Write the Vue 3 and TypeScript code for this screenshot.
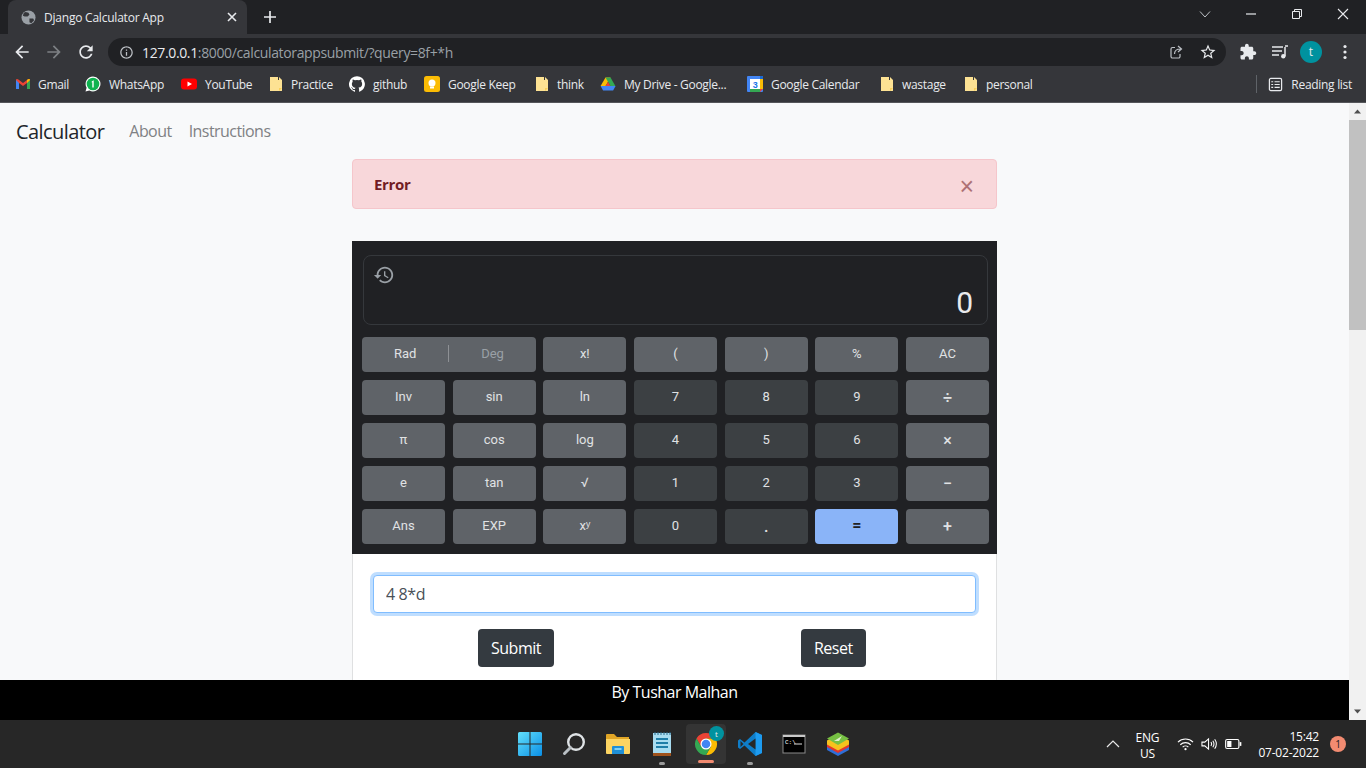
<script setup lang="ts">
interface Mark { name: string; label: string; width: number }
const marks: Mark[] = [
  { name: 'gmail', label: 'Gmail', width: 70 },
  { name: 'whatsapp', label: 'WhatsApp', width: 96 },
  { name: 'youtube', label: 'YouTube', width: 88 },
  { name: 'folder', label: 'Practice', width: 80 },
  { name: 'github', label: 'github', width: 75 },
  { name: 'keep', label: 'Google Keep', width: 111 },
  { name: 'folder', label: 'think', width: 65 },
  { name: 'drive', label: 'My Drive - Google...', width: 147 },
  { name: 'calendar', label: 'Google Calendar', width: 133 },
  { name: 'folder', label: 'wastage', width: 84 },
  { name: 'folder', label: 'personal', width: 69 }
]
interface Key { t: string; k: string }
const keys: Key[] = [
  { t: 'x!', k: 'fn' }, { t: '(', k: 'fn' }, { t: ')', k: 'fn' }, { t: '%', k: 'fn' }, { t: 'AC', k: 'fn' },
  { t: 'Inv', k: 'fn' }, { t: 'sin', k: 'fn' }, { t: 'ln', k: 'fn' }, { t: '7', k: 'num' }, { t: '8', k: 'num' }, { t: '9', k: 'num' }, { t: '÷', k: 'fn op' },
  { t: 'π', k: 'fn' }, { t: 'cos', k: 'fn' }, { t: 'log', k: 'fn' }, { t: '4', k: 'num' }, { t: '5', k: 'num' }, { t: '6', k: 'num' }, { t: '×', k: 'fn op' },
  { t: 'e', k: 'fn' }, { t: 'tan', k: 'fn' }, { t: '√', k: 'fn' }, { t: '1', k: 'num' }, { t: '2', k: 'num' }, { t: '3', k: 'num' }, { t: '−', k: 'fn op' },
  { t: 'Ans', k: 'fn' }, { t: 'EXP', k: 'fn' }, { t: 'xʸ', k: 'fn' }, { t: '0', k: 'num' }, { t: '.', k: 'num op' }, { t: '=', k: 'eq' }, { t: '+', k: 'fn op' }
]
</script>

<template>
  <div class="screen">
    <header class="chrome">
      <div class="tabstrip">
        <div class="tab">
          <svg class="globe" viewBox="0 0 16 16" width="15" height="15"><circle cx="8" cy="8" r="7.5" fill="#9aa0a6"/><path d="M5 2l3 1 1 2-2 2-3 0-2-1 1-3zM9 9l4 0 1 2-3 3-2-1z" fill="#35363a"/></svg>
          <span class="tabtitle">Django Calculator App</span>
          <svg viewBox="0 0 10 10" width="10" height="10"><path d="M1 1l8 8M9 1l-8 8" stroke="#e8eaed" stroke-width="1.6"/></svg>
        </div>
        <svg class="plus" viewBox="0 0 14 14" width="14" height="14"><path d="M7 1v12M1 7h12" stroke="#e8eaed" stroke-width="1.7"/></svg>
        <div class="wincontrols">
          <svg viewBox="0 0 12 12" width="12" height="12"><path d="M1 3.5l5 5.5 5-5.5" fill="none" stroke="#bdc1c6"/></svg>
          <svg viewBox="0 0 12 12" width="12" height="12"><path d="M1 6h10" stroke="#e8eaed" stroke-width="1.2"/></svg>
          <svg viewBox="0 0 12 12" width="12" height="12"><path d="M1.5 3.5h7v7h-7zM3.5 3.500v-2h7v7h-2" fill="none" stroke="#e8eaed"/></svg>
          <svg viewBox="0 0 12 12" width="12" height="12"><path d="M1 1l10 10M11 1l-10 10" stroke="#e8eaed" stroke-width="1.1"/></svg>
        </div>
      </div>
      <div class="toolbar">
        <svg class="navicon first" viewBox="0 0 24 24" width="20" height="20"><path fill="#e8eaed" d="M20 11H7.83l5.59-5.59L12 4l-8 8 8 8 1.41-1.41L7.83 13H20v-2z"/></svg>
        <svg class="navicon" viewBox="0 0 24 24" width="20" height="20"><path fill="#7d8084" d="M4 11h12.17l-5.59-5.59L12 4l8 8-8 8-1.41-1.41L16.17 13H4v-2z"/></svg>
        <svg class="navicon" viewBox="0 0 24 24" width="20" height="20"><path fill="#e8eaed" d="M17.65 6.35C16.2 4.9 14.21 4 12 4c-4.42 0-7.99 3.58-7.99 8s3.57 8 7.99 8c3.73 0 6.84-2.55 7.73-6h-2.08c-.82 2.33-3.04 4-5.65 4-3.31 0-6-2.69-6-6s2.69-6 6-6c1.66 0 3.14.69 4.22 1.78L13 11h7V4l-2.35 2.35z"/></svg>
        <div class="omnibox">
          <svg viewBox="0 0 24 24" width="15" height="15"><path fill="#bdc1c6" d="M11 7h2v2h-2zm0 4h2v6h-2zm1-9C6.48 2 2 6.48 2 12s4.48 10 10 10 10-4.48 10-10S17.52 2 12 2zm0 18c-4.41 0-8-3.59-8-8s3.59-8 8-8 8 3.59 8 8-3.59 8-8 8z"/></svg>
          <span class="url"><b>127.0.0.1</b>:8000/calculatorappsubmit/?query=8f+*h</span>
          <svg class="share" viewBox="0 0 16 16" width="16" height="16"><path d="M7 3.5H4.5A1.5 1.5 0 003 5v7.5A1.5 1.5 0 004.5 14h6a1.5 1.5 0 001.5-1.5V10M6.5 10c0-3 2-5 6-5M10 2l3.5 3L10 8" fill="none" stroke="#bdc1c6" stroke-width="1.2"/></svg>
          <svg class="star" viewBox="0 0 24 24" width="18" height="18"><path fill="#e8eaed" d="M22 9.24l-7.19-.62L12 2 9.19 8.63 2 9.24l5.46 4.73L5.82 21 12 17.27 18.18 21l-1.63-7.03L22 9.24zM12 15.4l-3.76 2.27 1-4.28-3.32-2.88 4.38-.38L12 6.1l1.71 4.04 4.38.38-3.32 2.88 1 4.28L12 15.4z"/></svg>
        </div>
        <svg class="ext" viewBox="0 0 24 24" width="18" height="18"><path fill="#e8eaed" d="M20.5 11H19V7c0-1.1-.9-2-2-2h-4V3.5C13 2.12 11.88 1 10.5 1S8 2.12 8 3.5V5H4c-1.1 0-1.99.9-1.99 2v3.8H3.5c1.49 0 2.7 1.21 2.7 2.7s-1.21 2.7-2.7 2.7H2V20c0 1.1.9 2 2 2h3.8v-1.5c0-1.49 1.21-2.7 2.7-2.7 1.49 0 2.7 1.21 2.7 2.7V22H17c1.1 0 2-.9 2-2v-4h1.5c1.38 0 2.5-1.12 2.5-2.5S21.88 11 20.5 11z"/></svg>
        <svg class="media" viewBox="0 0 18 16" width="18" height="16"><path d="M1 3h11M1 7h10M1 11h7" stroke="#e8eaed" stroke-width="1.5"/><path d="M14 3v9" stroke="#e8eaed" stroke-width="1.5"/><path d="M14 2h3" stroke="#e8eaed" stroke-width="1.5"/><circle cx="12.3" cy="12.3" r="2.2" fill="#e8eaed"/></svg>
        <div class="avatar">t</div>
        <svg class="dots" viewBox="0 0 4 16" width="4" height="16"><circle cx="2" cy="2.5" r="1.6" fill="#e8eaed"/><circle cx="2" cy="8" r="1.6" fill="#e8eaed"/><circle cx="2" cy="13.5" r="1.6" fill="#e8eaed"/></svg>
      </div>
      <div class="bookmarks">
        <div v-for="m in marks" :key="m.label" class="mark" :style="{ width: m.width + 'px' }">
          <svg v-if="m.name === 'gmail'" class="gmail" viewBox="0 0 16 16" width="16" height="16"><path d="M1 4v9h3V7l4 3V7L3 3.2Q1 2.6 1 4z" fill="#ea4335"/><path d="M1 4v9h3V7z" fill="#4285f4"/><path d="M15 4v9h-3V7l-4 3V7l5-3.8Q15 2.6 15 4z" fill="#ea4335"/><path d="M15 4v9h-3V7z" fill="#34a853"/><path d="M12 7V4l1-.8Q15 2.6 15 4z" fill="#fbbc04"/></svg>
          <svg v-else-if="m.name === 'whatsapp'" viewBox="0 0 16 16" width="16" height="16"><path d="M8 .5a7.5 7.5 0 00-6.4 11.3L.5 15.6l3.9-1A7.5 7.5 0 108 .5z" fill="#fff"/><circle cx="8" cy="8" r="6.3" fill="#0fb350"/><path d="M6.700 5.400l2-1.100v7.300H7.300V6.300l-.6.300z" fill="#fff"/></svg>
          <svg v-else-if="m.name === 'youtube'" viewBox="0 0 16 16" width="16" height="16"><rect y="2.5" width="16" height="11" rx="3" fill="#f00"/><path d="M6.5 5.5L11 8l-4.500 2.500z" fill="#fff"/></svg>
          <svg v-else-if="m.name === 'github'" viewBox="0 0 24 24" width="16" height="16"><path fill="#fff" d="M12 .3a12 12 0 00-3.800 23.400c.6.1.8-.3.8-.6v-2c-3.300.7-4-1.600-4-1.600-.6-1.400-1.400-1.800-1.400-1.800-1-.7.1-.7.1-.7 1.200.1 1.800 1.200 1.800 1.200 1 1.800 2.800 1.300 3.500 1 .1-.8.4-1.300.8-1.600-2.700-.3-5.500-1.300-5.500-6 0-1.200.5-2.300 1.300-3.100-.2-.4-.6-1.600 0-3.200 0 0 1-.3 3.400 1.200a11.500 11.500 0 016 0c2.300-1.500 3.300-1.200 3.300-1.200.6 1.600.2 2.800.1 3.100.8.8 1.300 1.900 1.300 3.200 0 4.600-2.800 5.600-5.500 5.900.5.4.9 1 .9 2.200v3.300c0 .3.1.7.8.6A12 12 0 0012 .3"/></svg>
          <svg v-else-if="m.name === 'keep'" viewBox="0 0 16 16" width="16" height="16"><rect width="16" height="16" rx="2.500" fill="#fbbc04"/><circle cx="8" cy="7" r="3.500" fill="#fff"/><rect x="6" y="10.500" width="4" height="2" fill="#fff"/></svg>
          <svg v-else-if="m.name === 'drive'" viewBox="0 0 16 16" width="16" height="16"><path d="M5.500 1.500h5L5.600 10H.6z" fill="#fbbc04"/><path d="M10.500 1.500L15.400 10h-5L5.500 1.500z" fill="#34a853"/><path d="M.6 10h5l5 0h5l-2.500 4.500h-10z" fill="#4285f4"/><path d="M8 5.700L10.400 10H5.600z" fill="#ea4335"/></svg>
          <svg v-else-if="m.name === 'calendar'" viewBox="0 0 16 16" width="16" height="16"><rect width="16" height="16" rx="1" fill="#4285f4"/><rect x="3" y="3" width="10" height="10" fill="#fff"/><path d="M13 0h2a1 1 0 011 1v3h-3z" fill="#1967d2"/><path d="M13 3h3v10h-3z" fill="#fbbc04"/><path d="M3 13h10v3H3z" fill="#34a853"/><path d="M13 13h3l-3 3z" fill="#ea4335"/><text x="8" y="11.500" text-anchor="middle" class="caltext">3</text></svg>
          <svg v-else viewBox="0 0 14 16" width="14" height="16"><path d="M1 1h8v3h4v10.500a.5.5 0 01-.5.5H1z" fill="#fde293"/><path d="M10 1l3 3h-3z" fill="#fde293"/><path d="M10 12h3l-3 3z" fill="#f9cf59"/></svg>
          <span>{{ m.label }}</span>
        </div>
        <div class="reading">
          <svg viewBox="0 0 16 16" width="15" height="15"><rect x="1.500" y="1.500" width="13" height="13" rx="1.500" fill="none" stroke="#e8eaed" stroke-width="1.300"/><path d="M3.500 5h2M7 5h5.500M3.500 8h2M7 8h5.500M3.500 11h2M7 11h5.500" stroke="#e8eaed" stroke-width="1.200"/></svg>
          <span>Reading list</span>
        </div>
      </div>
    </header>

    <div class="viewport">
      <div class="page">
        <div class="scroll">
          <nav class="navbar">
            <span class="brand">Calculator</span>
            <span class="link">About</span>
            <span class="link">Instructions</span>
          </nav>
          <main class="container">
            <div class="alert">
              <strong>Error</strong>
              <span class="alertclose">×</span>
            </div>
            <section class="calc">
              <div class="display">
                <svg class="history" viewBox="0 0 24 24" width="22" height="22"><path fill="#9aa0a6" d="M13 3c-4.970 0-9 4.030-9 9H1l3.890 3.890.07.14L9 12H6c0-3.870 3.130-7 7-7s7 3.130 7 7-3.130 7-7 7c-1.930 0-3.680-.79-4.940-2.060l-1.420 1.420C8.270 19.990 10.510 21 13 21c4.970 0 9-4.030 9-9s-4.030-9-9-9zm-1 5v5l4.280 2.540.72-1.210-3.500-2.080V8H12z"/></svg>
                <span class="readout">0</span>
              </div>
              <div class="keys">
                <div class="key fn radeg"><span>Rad</span><i></i><span class="dim">Deg</span></div>
                <div v-for="(k, i) in keys" :key="i" class="key" :class="k.k">{{ k.t }}</div>
              </div>
            </section>
            <section class="card">
              <input class="field" value="4 8*d" />
              <div class="actions">
                <button class="btn">Submit</button>
                <button class="btn">Reset</button>
              </div>
            </section>
          </main>
        </div>
        <footer class="footer">By Tushar Malhan</footer>
      </div>
      <div class="scrollbar">
        <svg viewBox="0 0 17 17" width="17" height="17"><path d="M5 10.500l3.500-4 3.500 4z" fill="#505050"/></svg>
        <div class="track"><div class="thumb"></div></div>
        <svg viewBox="0 0 17 17" width="17" height="17"><path d="M5 6.500l3.500 4 3.500-4z" fill="#505050"/></svg>
      </div>
    </div>

    <div class="taskbar">
      <div class="apps">
        <div class="app"><svg viewBox="0 0 24 24" width="24" height="24"><defs><linearGradient id="win" x1="0" y1="0" x2="1" y2="1"><stop offset="0" stop-color="#63e0fb"/><stop offset="1" stop-color="#0a8fe6"/></linearGradient></defs><path d="M0 1.500A1.500 1.500 0 011.500 0h10v11.500H0zM12.500 0h10A1.500 1.500 0 0124 1.500v10H12.500zM0 12.500h11.500V24h-10A1.500 1.500 0 010 22.500zM12.500 12.500H24v10a1.500 1.500 0 01-1.500 1.500h-10z" fill="url(#win)"/></svg></div>
        <div class="app"><svg viewBox="0 0 24 24" width="24" height="24"><circle cx="14" cy="10" r="7.800" fill="none" stroke="#dfe3e6" stroke-width="2.400"/><path d="M8.500 15.500L2.500 21.500" stroke="#b9bfc4" stroke-width="3" stroke-linecap="round"/></svg></div>
        <div class="app"><svg viewBox="0 0 24 24" width="24" height="24"><path d="M0 3a1 1 0 011-1h7l3 3h12v5H0z" fill="#e0a526"/><path d="M0 7h24v14a1 1 0 01-1 1H1a1 1 0 01-1-1z" fill="#fcd462"/><path d="M7 14h10a1 1 0 011 1v7H6v-7a1 1 0 011-1z" fill="#1f8fd6"/><rect x="8.500" y="16" width="7" height="2" fill="#7fd0f5"/></svg></div>
        <div class="app withdot"><svg viewBox="0 0 24 24" width="24" height="24"><rect x="3" y="1" width="18" height="22" fill="#a8dcf0"/><path d="M3 21h18v3H3z" fill="#a0531d"/><path d="M5 0v3M8 0v3M11 0v3M14 0v3M17 0v3M20 0v3" stroke="#2a6d8e" stroke-width="1"/><path d="M6 7h12M6 11h12M6 15h12" stroke="#1f7ea8" stroke-width="2"/></svg></div>
        <div class="app active">
          <svg viewBox="0 0 24 24" width="24" height="24"><path d="M2.470 6.500A11 11 0 0121.530 6.500H12L7.200 14.800z" fill="#ea4335"/><path d="M21.530 6.500A11 11 0 0112 23l4.800-8.200L12 6.500z" fill="#fbbc04"/><path d="M12 23A11 11 0 012.470 6.500l4.800 8.300h9.500z" fill="#34a853"/><circle cx="12" cy="12" r="5.500" fill="#fff"/><circle cx="12" cy="12" r="4.300" fill="#4285f4"/></svg>
          <span class="tbadge">t</span>
        </div>
        <div class="app withdot"><svg viewBox="0 0 24 24" width="24" height="24"><path d="M17.500 0L24 3v18l-6.500 3-11-10.500L2 17 0 15.500v-7L2 7l4.500 3.500z" fill="#0f7dc8"/><path d="M17.500 0L24 3v18l-6.500 3z" fill="#1d9bf0"/><path d="M17.500 6.500L10 12l7.500 5.500z" fill="#272727"/><path d="M2.500 9v6l3-3z" fill="#272727"/></svg></div>
        <div class="app"><svg viewBox="0 0 24 20" width="24" height="20"><rect x="1" y="1" width="22" height="18" fill="#000" stroke="#8a8a8a"/><rect x="1" y="1" width="22" height="2" fill="#c8c8c8"/><text x="3" y="9.500" class="cmdtext">C:\</text><path d="M12 10h8" stroke="#ddd"/></svg></div>
        <div class="app"><svg viewBox="0 0 24 24" width="24" height="24"><path d="M1 14l11-6 11 6v4l-11 6-11-6z" fill="#2f6fd8"/><path d="M1 11l11-6 11 6v4l-11 6-11-6z" fill="#e2352e"/><path d="M1 8.500l11-6 11 6v4l-11 6-11-6z" fill="#f6c21d"/><path d="M1 6.500L12 .5l11 6-11 6.500z" fill="#76c043"/><path d="M8 9l8-5-3 5z" fill="#dff0cf"/></svg></div>
      </div>
      <div class="tray">
        <svg class="chev" viewBox="0 0 14 8" width="14" height="8"><path d="M1 7l6-6 6 6" fill="none" stroke="#e8e8e8" stroke-width="1.200"/></svg>
        <div class="lang"><span>ENG</span><span>US</span></div>
        <svg class="wifi" viewBox="0 0 18 14" width="17" height="14"><path d="M1 5a11.500 11.500 0 0116 0M3.500 7.800a8 8 0 0111 0M6 10.300a4.300 4.300 0 016 0" fill="none" stroke="#fff" stroke-width="1.200"/><circle cx="9" cy="12.500" r="1.200" fill="#fff"/></svg>
        <svg class="vol" viewBox="0 0 18 14" width="17" height="14"><path d="M1 5h3l4-3.500v11L4 9H1z" fill="none" stroke="#fff" stroke-width="1.100"/><path d="M10.500 5q1.500 2 0 4M12.500 3.500q2.500 3.500 0 7M14.500 2q3.500 5 0 10" fill="none" stroke="#fff" stroke-width="1.100"/></svg>
        <svg class="batt" viewBox="0 0 18 12" width="17" height="12"><rect x=".7" y="1.200" width="14" height="9.600" rx="1.500" fill="none" stroke="#fff" stroke-width="1.200"/><rect x="2.300" y="2.800" width="4.500" height="6.400" fill="#fff"/><rect x="15.500" y="4" width="1.800" height="4" fill="#fff"/></svg>
        <div class="clock"><span>15:42</span><span>07-02-2022</span></div>
        <div class="notif">1</div>
      </div>
    </div>
  </div>
</template>

<style scoped>
.screen { width: 1366px; height: 768px; display: flex; flex-direction: column; overflow: hidden; font-family: "Open Sans", "Noto Sans", sans-serif; }
.chrome { height: 103px; flex: none; background: #35363a; color: #e8eaed; border-bottom: 1px solid #55565a; box-sizing: border-box; }
.tabstrip { height: 34px; background: #202124; display: flex; align-items: center; padding-left: 8px; }
.tab { width: 239px; height: 34px; box-sizing: border-box; background: #35363a; border-radius: 8px 8px 0 0; display: flex; align-items: center; padding: 0 10px 0 13px; margin-right: 16px; }
.globe { margin-right: 8px; }
.tabtitle { flex: 1; font-size: 12px; letter-spacing: -.22px; }
.plus { margin-right: auto; }
.wincontrols { display: flex; width: 150px; margin-right: 17px; margin-bottom: 6px; justify-content: space-between; }
.toolbar { height: 33px; box-sizing: border-box; padding-top: 3px; display: flex; align-items: center; }
.navicon { margin-right: 12px; }
.navicon.first { margin-left: 12px; }
.omnibox { width: 1118px; height: 28px; box-sizing: border-box; background: #202124; border-radius: 14px; display: flex; align-items: center; padding: 0 9px 0 11px; }
.url { flex: 1; margin-left: 8px; font-size: 14px; letter-spacing: -.36px; color: #9aa0a6; white-space: nowrap; }
.url b { font-weight: 400; color: #e8eaed; }
.share { margin-right: 15px; }
.ext { margin-left: 13px; }
.media { margin-left: 14px; }
.avatar { width: 22px; height: 22px; border-radius: 50%; background: #00929f; color: #e8eaed; font-size: 12px; line-height: 21px; text-align: center; margin-left: 11px; }
.dots { margin-left: 21px; }
.bookmarks { height: 35px; box-sizing: border-box; padding: 0 0 1px 15px; display: flex; align-items: center; font-size: 12px; letter-spacing: -.3px; white-space: nowrap; }
.mark { display: flex; align-items: center; gap: 8px; flex: none; }
.gmail { margin-right: -1px; }
.caltext { font: 700 9px "Liberation Sans", sans-serif; fill: #1a73e8; }
.reading { display: flex; align-items: center; gap: 8px; margin-left: auto; margin-right: 14px; padding-left: 11px; border-left: 1px solid #5f6368; height: 18px; }
.viewport { flex: 1; display: flex; min-height: 0; }
.page { flex: 1; min-width: 0; display: flex; flex-direction: column; background: #f8f9fa; }
.scroll { flex: 1; min-height: 0; overflow: hidden; }
.navbar { height: 56px; display: flex; align-items: center; padding: 0 16px; gap: 17px; font-size: 16px; color: #7f8184; letter-spacing: -.55px; }
.brand { font-size: 20px; color: #212529; margin-right: 8px; letter-spacing: -.58px; }
.container { width: 645px; margin-left: 352px; }
.alert { height: 50px; box-sizing: border-box; background: #f8d7da; border: 1px solid #f5c6cb; border-radius: 4px; color: #721c24; display: flex; align-items: center; justify-content: space-between; padding: 0 22px 0 21px; font-size: 15px; }
.alert strong { font-weight: 700; letter-spacing: -.3px; }
.alertclose { font-size: 25px; font-weight: 400; color: #721c24; opacity: .55; line-height: 1; margin-top: 5px; font-family: "Liberation Sans", sans-serif; }
.calc { margin-top: 32px; height: 313px; box-sizing: border-box; background: #202124; padding: 14px 8px 0 10px; font-family: Roboto, "Liberation Sans", sans-serif; }
.display { position: relative; height: 70px; margin: 0 1px; box-sizing: border-box; border: 1px solid #35383c; border-radius: 8px; }
.history { position: absolute; left: 9px; top: 8px; }
.readout { position: absolute; right: 14px; bottom: 1px; font-size: 30px; color: #e8eaed; line-height: 40px; }
.keys { margin-top: 12px; display: grid; grid-template-columns: repeat(7, 1fr); grid-auto-rows: 35px; column-gap: 7.67px; row-gap: 8px; }
.key { border-radius: 4px; display: flex; align-items: center; justify-content: center; font-size: 13px; color: #e0e2e4; padding-bottom: 3px; box-sizing: border-box; }
.fn { background: #5f6368; }
.num { background: #3c4043; }
.op { font-size: 16px; font-weight: 500; padding-bottom: 1px; }
.eq { background: #8ab4f8; color: #202124; font-weight: 700; font-size: 16px; }
.radeg { grid-column: span 2; display: grid; grid-template-columns: 1fr 1px 1fr; align-items: center; justify-items: center; }
.radeg i { width: 1px; height: 17px; background: #8e9195; }
.dim { color: #9aa0a6; }
.card { height: 200px; box-sizing: border-box; background: #fff; border: 1px solid #dfe0e1; border-top: 0; border-radius: 0 0 4px 4px; padding: 21px 20px 0; }
.field { display: block; width: 100%; height: 38px; box-sizing: border-box; border: 1px solid #80bdff; border-radius: 4px; box-shadow: 0 0 0 3px rgba(0, 123, 255, .25); outline: 0; padding: 0 12px; font: 16px "Open Sans", "Noto Sans", sans-serif; letter-spacing: -.4px; color: #495057; background: #fff; }
.actions { display: flex; padding-left: 105px; gap: 247px; margin-top: 16px; }
.btn { height: 38px; box-sizing: border-box; border: 0; border-radius: 4px; background: #343a40; color: #fff; font: 16px "Open Sans", "Noto Sans", sans-serif; letter-spacing: -.5px; padding: 0 13px; }
.footer { height: 40px; flex: none; background: #000; color: #fff; font-size: 16px; letter-spacing: -.5px; text-align: center; line-height: 25px; }
.scrollbar { width: 17px; flex: none; background: #f1f1f1; display: flex; flex-direction: column; }
.track { flex: 1; }
.thumb { height: 210px; background: #c1c1c1; }
.taskbar { height: 48px; flex: none; background: #272727; position: relative; display: flex; color: #fff; }
.apps { position: absolute; left: 508px; top: 0; height: 48px; display: flex; }
.app { position: relative; width: 44px; height: 48px; display: flex; align-items: center; justify-content: center; }
.withdot::after { content: ""; position: absolute; bottom: 3px; left: 19px; width: 6px; height: 3px; border-radius: 2px; background: #9b9b9b; }
.active { background: #343434; width: 40px; height: 40px; margin: 4px 2px; border-radius: 4px; }
.active::after { content: ""; position: absolute; bottom: 1px; left: 12px; width: 16px; height: 3px; border-radius: 2px; background: #f28b71; }
.tbadge { position: absolute; right: 2px; top: 2px; width: 15px; height: 15px; border-radius: 50%; background: #00929f; color: #e8eaed; font-size: 8px; line-height: 15px; text-align: center; }
.cmdtext { font: 6px "Liberation Mono", monospace; fill: #fff; }
.tray { margin-left: auto; display: flex; align-items: center; padding-right: 20px; font-size: 12px; letter-spacing: -.2px; }
.chev { margin-right: 16px; }
.lang { display: flex; flex-direction: column; align-items: center; line-height: 16px; margin-right: 18px; margin-top: 3px; }
.wifi { margin-right: 7px; }
.vol { margin-right: 7px; }
.batt { margin-right: 16px; }
.clock { display: flex; flex-direction: column; align-items: flex-end; line-height: 16px; margin-right: 11px; margin-top: 1px; }
.notif { width: 16px; height: 16px; border-radius: 50%; background: #f28b71; color: #202124; font-size: 10px; line-height: 16px; text-align: center; }
</style>

<style>
html, body { margin: 0; background: #272727; }
</style>
